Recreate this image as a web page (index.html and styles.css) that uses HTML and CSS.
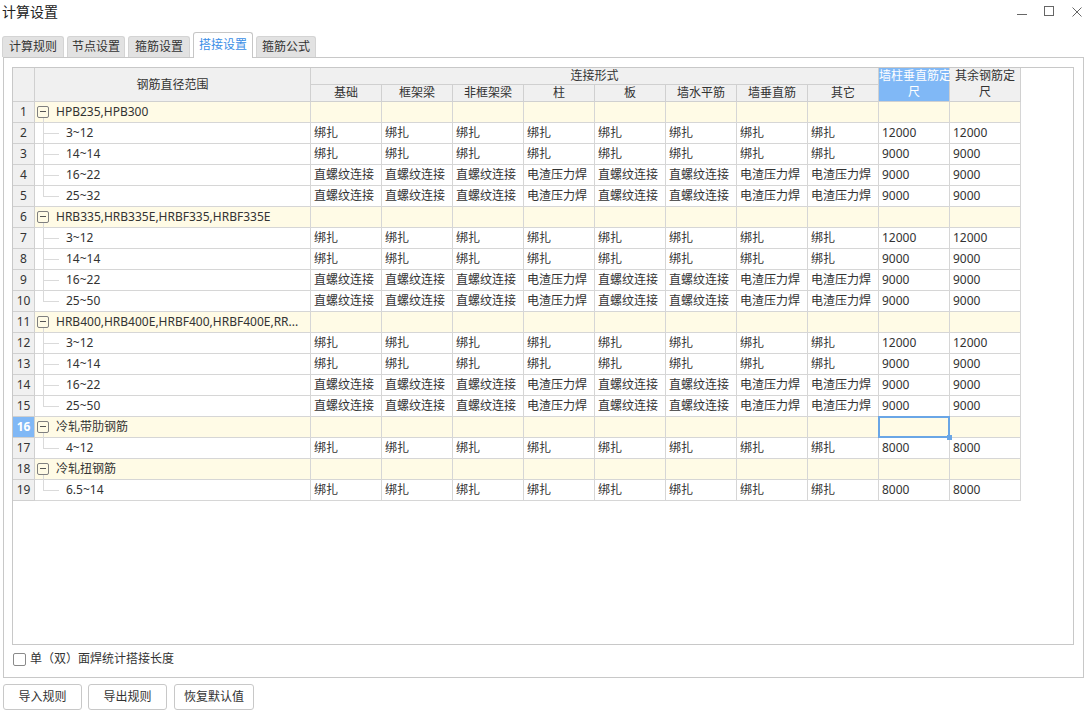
FILE: index.html
```html
<!DOCTYPE html>
<html lang="zh-CN">
<head>
<meta charset="utf-8">
<title>计算设置</title>
<link rel="stylesheet" href="styles.css">
</head>
<body>
<div class="titlebar">
  <div class="title">计算设置</div>
  <svg class="winctl" width="72" height="24" viewBox="0 0 72 24">
    <line x1="5" y1="14.5" x2="15" y2="14.5" stroke="#666" stroke-width="1"/>
    <rect x="32.5" y="6.5" width="9" height="9" fill="none" stroke="#666" stroke-width="1"/>
    <path d="M60.5 7.5 L69.5 16.5 M69.5 7.5 L60.5 16.5" stroke="#666" stroke-width="1" fill="none"/>
  </svg>
</div>
<div class="tabs">
  <div class="tab w62">计算规则</div>
  <div class="tab w58">节点设置</div>
  <div class="tab w62">箍筋设置</div>
  <div class="tab active w60">搭接设置</div>
  <div class="tab w60">箍筋公式</div>
</div>
<div class="panel">
  <div class="grid-wrap">
    <div class="grid">
      <div class="h rn span2"></div>
      <div class="h span2 hc">钢筋直径范围</div>
      <div class="h span8">连接形式</div>
      <div class="h span2 two blue">墙柱垂直筋定<br>尺</div>
      <div class="h span2 two">其余钢筋定<br>尺</div>
      <div class="h">基础</div>
      <div class="h">框架梁</div>
      <div class="h">非框架梁</div>
      <div class="h">柱</div>
      <div class="h">板</div>
      <div class="h">墙水平筋</div>
      <div class="h">墙垂直筋</div>
      <div class="h">其它</div>

      <!-- row 1 -->
      <div class="rn">1</div>
      <div class="g rg grp"><span class="box"></span>HPB235,HPB300</div>
      <div class="g"></div><div class="g"></div><div class="g"></div><div class="g"></div><div class="g"></div><div class="g"></div><div class="g"></div><div class="g"></div><div class="g"></div><div class="g"></div>
      <!-- row 2 -->
      <div class="rn">2</div>
      <div class="rg ch">3~12</div>
      <div class="c">绑扎</div><div class="c">绑扎</div><div class="c">绑扎</div><div class="c">绑扎</div><div class="c">绑扎</div><div class="c">绑扎</div><div class="c">绑扎</div><div class="c">绑扎</div><div class="c">12000</div><div class="c">12000</div>
      <!-- row 3 -->
      <div class="rn">3</div>
      <div class="rg ch">14~14</div>
      <div class="c">绑扎</div><div class="c">绑扎</div><div class="c">绑扎</div><div class="c">绑扎</div><div class="c">绑扎</div><div class="c">绑扎</div><div class="c">绑扎</div><div class="c">绑扎</div><div class="c">9000</div><div class="c">9000</div>
      <!-- row 4 -->
      <div class="rn">4</div>
      <div class="rg ch">16~22</div>
      <div class="c">直螺纹连接</div><div class="c">直螺纹连接</div><div class="c">直螺纹连接</div><div class="c">电渣压力焊</div><div class="c">直螺纹连接</div><div class="c">直螺纹连接</div><div class="c">电渣压力焊</div><div class="c">电渣压力焊</div><div class="c">9000</div><div class="c">9000</div>
      <!-- row 5 -->
      <div class="rn">5</div>
      <div class="rg ch last">25~32</div>
      <div class="c">直螺纹连接</div><div class="c">直螺纹连接</div><div class="c">直螺纹连接</div><div class="c">电渣压力焊</div><div class="c">直螺纹连接</div><div class="c">直螺纹连接</div><div class="c">电渣压力焊</div><div class="c">电渣压力焊</div><div class="c">9000</div><div class="c">9000</div>

      <!-- row 6 -->
      <div class="rn">6</div>
      <div class="g rg grp"><span class="box"></span>HRB335,HRB335E,HRBF335,HRBF335E</div>
      <div class="g"></div><div class="g"></div><div class="g"></div><div class="g"></div><div class="g"></div><div class="g"></div><div class="g"></div><div class="g"></div><div class="g"></div><div class="g"></div>
      <!-- row 7 -->
      <div class="rn">7</div>
      <div class="rg ch">3~12</div>
      <div class="c">绑扎</div><div class="c">绑扎</div><div class="c">绑扎</div><div class="c">绑扎</div><div class="c">绑扎</div><div class="c">绑扎</div><div class="c">绑扎</div><div class="c">绑扎</div><div class="c">12000</div><div class="c">12000</div>
      <!-- row 8 -->
      <div class="rn">8</div>
      <div class="rg ch">14~14</div>
      <div class="c">绑扎</div><div class="c">绑扎</div><div class="c">绑扎</div><div class="c">绑扎</div><div class="c">绑扎</div><div class="c">绑扎</div><div class="c">绑扎</div><div class="c">绑扎</div><div class="c">9000</div><div class="c">9000</div>
      <!-- row 9 -->
      <div class="rn">9</div>
      <div class="rg ch">16~22</div>
      <div class="c">直螺纹连接</div><div class="c">直螺纹连接</div><div class="c">直螺纹连接</div><div class="c">电渣压力焊</div><div class="c">直螺纹连接</div><div class="c">直螺纹连接</div><div class="c">电渣压力焊</div><div class="c">电渣压力焊</div><div class="c">9000</div><div class="c">9000</div>
      <!-- row 10 -->
      <div class="rn">10</div>
      <div class="rg ch last">25~50</div>
      <div class="c">直螺纹连接</div><div class="c">直螺纹连接</div><div class="c">直螺纹连接</div><div class="c">电渣压力焊</div><div class="c">直螺纹连接</div><div class="c">直螺纹连接</div><div class="c">电渣压力焊</div><div class="c">电渣压力焊</div><div class="c">9000</div><div class="c">9000</div>

      <!-- row 11 -->
      <div class="rn">11</div>
      <div class="g rg grp"><span class="box"></span>HRB400,HRB400E,HRBF400,HRBF400E,RR...</div>
      <div class="g"></div><div class="g"></div><div class="g"></div><div class="g"></div><div class="g"></div><div class="g"></div><div class="g"></div><div class="g"></div><div class="g"></div><div class="g"></div>
      <!-- row 12 -->
      <div class="rn">12</div>
      <div class="rg ch">3~12</div>
      <div class="c">绑扎</div><div class="c">绑扎</div><div class="c">绑扎</div><div class="c">绑扎</div><div class="c">绑扎</div><div class="c">绑扎</div><div class="c">绑扎</div><div class="c">绑扎</div><div class="c">12000</div><div class="c">12000</div>
      <!-- row 13 -->
      <div class="rn">13</div>
      <div class="rg ch">14~14</div>
      <div class="c">绑扎</div><div class="c">绑扎</div><div class="c">绑扎</div><div class="c">绑扎</div><div class="c">绑扎</div><div class="c">绑扎</div><div class="c">绑扎</div><div class="c">绑扎</div><div class="c">9000</div><div class="c">9000</div>
      <!-- row 14 -->
      <div class="rn">14</div>
      <div class="rg ch">16~22</div>
      <div class="c">直螺纹连接</div><div class="c">直螺纹连接</div><div class="c">直螺纹连接</div><div class="c">电渣压力焊</div><div class="c">直螺纹连接</div><div class="c">直螺纹连接</div><div class="c">电渣压力焊</div><div class="c">电渣压力焊</div><div class="c">9000</div><div class="c">9000</div>
      <!-- row 15 -->
      <div class="rn">15</div>
      <div class="rg ch last">25~50</div>
      <div class="c">直螺纹连接</div><div class="c">直螺纹连接</div><div class="c">直螺纹连接</div><div class="c">电渣压力焊</div><div class="c">直螺纹连接</div><div class="c">直螺纹连接</div><div class="c">电渣压力焊</div><div class="c">电渣压力焊</div><div class="c">9000</div><div class="c">9000</div>

      <!-- row 16 -->
      <div class="rn cur">16</div>
      <div class="g rg grp"><span class="box"></span>冷轧带肋钢筋</div>
      <div class="g"></div><div class="g"></div><div class="g"></div><div class="g"></div><div class="g"></div><div class="g"></div><div class="g"></div><div class="g"></div><div class="g sel"></div><div class="g"></div>
      <!-- row 17 -->
      <div class="rn">17</div>
      <div class="rg ch last">4~12</div>
      <div class="c">绑扎</div><div class="c">绑扎</div><div class="c">绑扎</div><div class="c">绑扎</div><div class="c">绑扎</div><div class="c">绑扎</div><div class="c">绑扎</div><div class="c">绑扎</div><div class="c">8000</div><div class="c">8000</div>

      <!-- row 18 -->
      <div class="rn">18</div>
      <div class="g rg grp"><span class="box"></span>冷轧扭钢筋</div>
      <div class="g"></div><div class="g"></div><div class="g"></div><div class="g"></div><div class="g"></div><div class="g"></div><div class="g"></div><div class="g"></div><div class="g"></div><div class="g"></div>
      <!-- row 19 -->
      <div class="rn">19</div>
      <div class="rg ch last">6.5~14</div>
      <div class="c">绑扎</div><div class="c">绑扎</div><div class="c">绑扎</div><div class="c">绑扎</div><div class="c">绑扎</div><div class="c">绑扎</div><div class="c">绑扎</div><div class="c">绑扎</div><div class="c">8000</div><div class="c">8000</div>
    </div>
  </div>
  <label class="check"><span class="cbox"></span>单（双）面焊统计搭接长度</label>
</div>
<div class="btns">
  <div class="btn">导入规则</div>
  <div class="btn">导出规则</div>
  <div class="btn wide">恢复默认值</div>
</div>
</body>
</html>
```
FILE: styles.css
```css
html, body {
  margin: 0;
  padding: 0;
}
body {
  width: 1084px;
  height: 715px;
  overflow: hidden;
  background: #ffffff;
  font-family: "Noto Sans", "Noto Sans CJK SC", "Microsoft YaHei", sans-serif;
  font-size: 12px;
  color: #333333;
}

.titlebar {
  height: 32px;
  display: flex;
  justify-content: space-between;
  align-items: flex-start;
}
.title {
  font-size: 14px;
  line-height: 24px;
  padding-left: 2px;
  color: #222222;
}
.winctl {
  display: block;
}

.tabs {
  height: 25px;
  display: flex;
  align-items: flex-end;
  gap: 3px;
  padding-left: 2px;
  position: relative;
  z-index: 1;
}
.tab {
  box-sizing: border-box;
  height: 21px;
  background: #e2e2e2;
  border: 1px solid #d4d4d4;
  border-bottom: none;
  border-radius: 3px 3px 0 0;
  text-align: center;
  line-height: 20px;
  color: #333333;
}
.tab.active {
  height: 26px;
  margin-bottom: -1px;
  background: #ffffff;
  border-color: #c6c6c6;
  color: #3a8ee6;
  line-height: 24px;
}
.w62 { width: 62px; }
.w58 { width: 58px; }
.w60 { width: 60px; }

.panel {
  box-sizing: border-box;
  width: 1081px;
  height: 621px;
  margin-left: 3px;
  border: 1px solid #c8c8c8;
  padding: 9px 9px 0 8px;
}

.grid-wrap {
  box-sizing: border-box;
  width: 1062px;
  height: 578px;
  border: 1px solid #c8c8c8;
  overflow: hidden;
}
.grid {
  display: grid;
  grid-template-columns: 22px 276px repeat(10, 71px);
  grid-template-rows: 17px 17px;
  grid-auto-rows: 21px;
}
.grid > div {
  box-sizing: border-box;
  border-right: 1px solid #d6d6d6;
  border-bottom: 1px solid #d6d6d6;
  white-space: nowrap;
  line-height: 20px;
}

.h {
  background: #f0f0f0;
  text-align: center;
  line-height: 16px !important;
  border-color: #d0d0d0 !important;
}
.span2 { grid-row: span 2; }
.span8 { grid-column: span 8; }
.hc { display: flex; align-items: center; justify-content: center; }
.two { overflow: visible; }
.blue {
  background: #80b8f6;
  color: #ffffff;
}

.rn {
  background: #f0f0f0;
  text-align: center;
  border-color: #d0d0d0 !important;
}
.rn.cur {
  background: #80b8f6;
  color: #ffffff;
  font-weight: bold;
}

.c {
  padding-left: 3px;
  background: #ffffff;
}
.g {
  background: #fffbe6;
}

.rg {
  position: relative;
}
.grp {
  display: flex;
  align-items: center;
  padding-left: 2px;
}
.box {
  position: relative;
  box-sizing: border-box;
  width: 12px;
  height: 12px;
  border: 1px solid #808080;
  border-radius: 2px;
  margin-right: 7px;
  flex: none;
}
.box::after {
  content: "";
  position: absolute;
  left: 2px;
  top: 4px;
  width: 6px;
  height: 1px;
  background: #555555;
}
.grp::after {
  content: "";
  position: absolute;
  left: 8px;
  top: 16px;
  bottom: -1px;
  width: 1px;
  background: #dadada;
}
.ch {
  padding-left: 31px;
  background: #ffffff;
}
.ch::before {
  content: "";
  position: absolute;
  left: 8px;
  top: 0;
  bottom: -1px;
  width: 1px;
  background: #dadada;
}
.ch.last::before {
  bottom: 50%;
}
.ch::after {
  content: "";
  position: absolute;
  left: 8px;
  top: 50%;
  width: 16px;
  height: 1px;
  background: #dadada;
}

.sel {
  position: relative;
  overflow: visible;
}
.sel::before {
  content: "";
  position: absolute;
  left: -1px;
  top: -1px;
  right: -1px;
  bottom: -1px;
  border: 2px solid #6aa6e6;
  z-index: 2;
}
.sel::after {
  content: "";
  position: absolute;
  right: -3px;
  bottom: -3px;
  width: 5px;
  height: 5px;
  background: #6aa6e6;
  z-index: 3;
}

.check {
  display: flex;
  align-items: center;
  margin: 7px 0 0 1px;
  height: 14px;
  line-height: 14px;
  color: #333333;
}
.cbox {
  box-sizing: border-box;
  width: 13px;
  height: 13px;
  border: 1px solid #8a8a8a;
  border-radius: 2px;
  background: #ffffff;
  margin-right: 4px;
}

.btns {
  display: flex;
  gap: 6px;
  margin: 6px 0 0 3px;
}
.btn {
  box-sizing: border-box;
  width: 79px;
  height: 26px;
  border: 1px solid #c8c8c8;
  border-radius: 3px;
  text-align: center;
  line-height: 24px;
  color: #333333;
  background: #ffffff;
}
.btn.wide {
  width: 80px;
  margin-left: 1px;
}
```
